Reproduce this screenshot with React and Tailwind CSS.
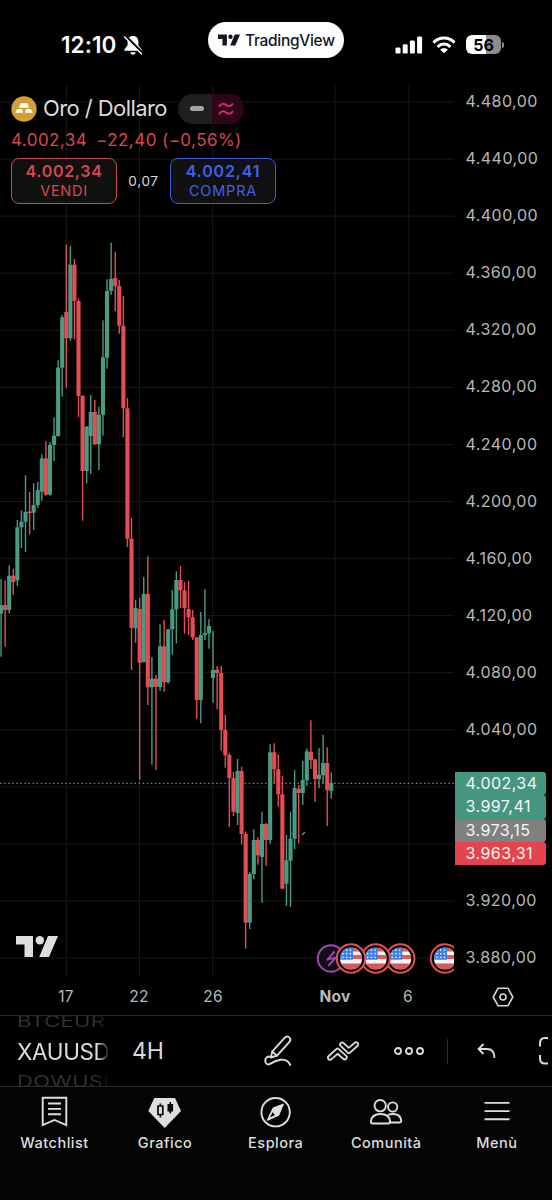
import React from "react";

const UP = "#4a9b83";
const DOWN = "#e44d53";

// [direction, high, body top, body bottom, low] in chart pixels
const CANDLES = [
  [1, 579, 605, 613.7, 656.7], [0, 580.7, 605, 610, 646.7], [1, 565.3, 575.7, 610, 613.3],
  [0, 569, 575.7, 582, 594.7], [1, 520, 527.3, 580.3, 586], [1, 510.3, 521.7, 527.3, 548],
  [1, 475.3, 512, 521.7, 552], [0, 492, 511.5, 513, 534.3], [1, 483.3, 505, 512.7, 530],
  [1, 482, 490, 505, 507.7], [1, 454.3, 458.3, 491.7, 500.7], [0, 441, 458.3, 494.7, 495.7],
  [1, 442, 445, 494.7, 495.7], [1, 417.3, 435.7, 445, 461], [1, 360.3, 367.7, 436, 436.7],
  [1, 315, 317.3, 367.7, 396.7], [0, 244.7, 312, 338.3, 387.7], [1, 246, 264.7, 338.3, 340.7],
  [0, 259, 264.7, 301, 339.3], [0, 298.3, 301, 396, 417.3], [0, 395, 396, 471, 520.7],
  [1, 426, 426.7, 471, 483.3], [1, 395, 412, 436, 474], [0, 400, 412, 444.3, 444.7],
  [1, 406.7, 415, 444.3, 470], [1, 320.3, 357.3, 415, 435.7], [1, 279.3, 291, 357.7, 368.7],
  [1, 242.7, 279, 291, 294.7], [0, 251.7, 278, 286, 311.3], [0, 280, 286, 325.7, 333.7],
  [0, 296, 325.7, 408.3, 437.3], [0, 398, 408.3, 538.7, 547], [0, 518, 538.7, 628, 670],
  [1, 599.7, 608, 628.3, 642.7], [0, 598, 609, 662.7, 780], [1, 577, 594, 662, 662.3],
  [0, 556.3, 594, 687.3, 705], [1, 657, 678.7, 687.3, 764.7], [0, 674.7, 678.7, 686.7, 770],
  [1, 624.3, 646.3, 687, 691], [0, 620, 646.3, 682.3, 692], [1, 629, 629.3, 682.3, 683.7],
  [1, 590, 609.3, 629.3, 654.7], [1, 571.3, 580, 609.3, 643.3], [0, 566, 580, 590.3, 608],
  [0, 582, 590.3, 608, 633.7], [0, 580.7, 609, 617.3, 635], [0, 610, 617.3, 637.3, 640],
  [0, 637, 637.3, 700, 718.7], [1, 612, 635, 700, 723.3], [1, 589, 633, 635, 640],
  [1, 619, 626, 633.3, 648.7], [1, 631, 670, 678, 702.7], [0, 666, 669.7, 673, 709.3],
  [0, 666, 673, 730, 750.7], [0, 714.7, 730, 755.3, 767.7], [0, 753, 755, 778, 827],
  [0, 772, 778, 811.7, 816], [1, 759, 771, 813, 825], [0, 766.7, 771, 834, 844.3],
  [0, 831.3, 834, 922.7, 948.7], [1, 872, 874, 922.7, 929], [1, 829.3, 840, 874, 879.3],
  [0, 837.3, 840, 855.3, 864.7], [1, 811.7, 824, 857, 902.7], [0, 823, 824, 840, 866],
  [1, 744.3, 752.3, 840, 843.7], [0, 743.3, 752.3, 769.3, 783.3], [0, 754.3, 769.3, 794.3, 806.7],
  [0, 776, 794.3, 888.7, 889], [1, 834.7, 860.3, 883.7, 906], [1, 811.7, 838.7, 860.7, 907],
  [1, 770, 788, 838.7, 849.3], [0, 785, 788.7, 793, 843.3], [1, 760.7, 780, 793, 805],
  [1, 748.3, 751.3, 780.3, 786], [0, 720.3, 751.7, 760, 769], [0, 759, 759.3, 779, 802],
  [1, 748, 774.7, 779, 788.3], [1, 734.7, 763, 775.3, 783.3], [0, 747.3, 763, 790, 826],
  [1, 772.3, 783, 791, 798.7],
];

const PRICES = [
  "4.480,00", "4.440,00", "4.400,00", "4.360,00", "4.320,00", "4.280,00", "4.240,00", "4.200,00",
  "4.160,00", "4.120,00", "4.080,00", "4.040,00", "", "", "3.920,00", "3.880,00",
];

const GRID_X = [66.3, 139.5, 212.7, 335, 408.8];

function TvMark({ className }) {
  return (
    <svg viewBox="0 0 42 21" className={className} fill="currentColor">
      <path d="M0 0H17V21H8.5V8.5H0Z" />
      <circle cx="23.8" cy="4.2" r="4.2" />
      <path d="M32 0H42L33 21H23.2Z" />
    </svg>
  );
}

function Flag({ cx }) {
  return (
    <g transform={`translate(${cx} 958.5)`}>
      <circle r="14.2" fill="#000" stroke={DOWN} strokeWidth="2" />
      <g clipPath="url(#flag)">
        <rect x="-11" y="-11" width="22" height="22" fill="#f5f5f5" />
        <rect x="-11" y="-11" width="22" height="4" fill="#e4575b" />
        <rect x="-11" y="-3.5" width="22" height="4" fill="#e4575b" />
        <rect x="-11" y="5" width="22" height="7" fill="#d9565a" />
        <rect x="-11" y="-12" width="13" height="13.2" fill="#3f7fe0" />
        {[-8, -4.3, -0.6].map((x) =>
          [-8.4, -4.8, -1.2].map((y) => <circle key={x + "_" + y} cx={x} cy={y} r="0.9" fill="#d6e6ff" />)
        )}
      </g>
    </g>
  );
}

function Chart() {
  return (
    <svg viewBox="0 85 454 891" className="block h-[891px] w-[454px]">
      <defs>
        <clipPath id="flag"><circle r="11" /></clipPath>
      </defs>
      <g stroke="#191919" strokeWidth="1">
        {PRICES.map((_, i) => (
          <line key={i} x1="0" x2="454" y1={102 + i * 57.07} y2={102 + i * 57.07} />
        ))}
        {GRID_X.map((x) => <line key={x} x1={x} x2={x} y1="85" y2="976" />)}
      </g>
      <line x1="0" x2="454" y1="783.4" y2="783.4" stroke={UP} strokeWidth="1.3" strokeDasharray="1.5 2.577" />
      {CANDLES.map(([up, high, top, bottom, low], i) => {
        const x = 1 + i * 4.077;
        const color = up ? UP : DOWN;
        return (
          <g key={i} fill={color}>
            <rect x={x - 0.65} y={high} width="1.4" height={low - high} />
            <rect x={x - 2} y={top} width="4.1" height={bottom - top} />
          </g>
        );
      })}
      <path d="M302 835L305 832" stroke="#8b93a5" strokeWidth="1.1" />
      <path d="M291.5 833L294 835" stroke="#8b93a5" strokeWidth="0.8" />
      <g transform="translate(331 958.5)">
        <circle r="13.2" fill="#140f17" stroke="#a247b8" strokeWidth="1.9" />
        <path d="M3.6 -7L-3.6 1.2L4.6 -0.9L-2.6 7.4" fill="none" stroke="#a247b8" strokeWidth="1.9" strokeLinejoin="round" />
      </g>
      {[445, 400.3, 375.7, 351].map((cx) => <Flag key={cx} cx={cx} />)}
    </svg>
  );
}

function StatusBar() {
  return (
    <header className="flex h-[85px] items-start justify-between pl-[61px] pr-[49px] pt-[22px] text-white">
      <div className="flex w-[147px] items-center pt-[9px]">
        <span className="w-[56px] whitespace-nowrap text-[22.5px] font-semibold leading-7 tracking-[0.1px]">12:10</span>
        <svg viewBox="0 0 20 20" className="ml-[5.5px] h-5 w-5">
          <path d="M10 1C6.4 1 4.6 3.7 4.6 7V10.2L1.2 14.8V15.8H18.8V14.8L15.4 10.2V7C15.4 3.7 13.6 1 10 1ZM7.3 17.2H12.7C12.5 18.6 11.4 19.5 10 19.5S7.5 18.6 7.3 17.2Z" fill="#fff" />
          <path d="M2.1 1L19.8 18.6" stroke="#000" strokeWidth="3" />
          <path d="M1.1 1.5L18.8 19.2" stroke="#fff" strokeWidth="1.4" />
        </svg>
      </div>
      <div className="flex h-9 w-[136px] shrink-0 items-center rounded-full bg-white pl-[10px] text-[#14161f]">
        <TvMark className="h-[12px] w-[22px]" />
        <span className="ml-[5px] whitespace-nowrap pt-px text-[15.5px] font-medium tracking-[-0.3px]">TradingView</span>
      </div>
      <div className="flex w-[159px] items-center justify-end pt-[13px]">
        <svg viewBox="0 0 28 18" className="h-[18px] w-7" fill="#fff">
          <rect x="0.5" y="11.5" width="5" height="6" rx="1.3" />
          <rect x="7.7" y="8.3" width="5" height="9.2" rx="1.3" />
          <rect x="14.9" y="4.5" width="5" height="13" rx="1.3" />
          <rect x="22.1" y="0.5" width="5" height="17" rx="1.3" />
        </svg>
        <svg viewBox="0 0 24 18" className="ml-[9px] h-[18px] w-6" fill="none" stroke="#fff" strokeWidth="3">
          <path d="M1.5 6.6C7.5 .6 16.5 .6 22.5 6.6" />
          <path d="M5.6 10.8C9.4 7.2 14.6 7.2 18.4 10.8" />
          <path d="M12 17.3L8.2 13.7C10.2 11.8 13.8 11.8 15.8 13.7Z" fill="#fff" stroke="none" />
        </svg>
        <div className="ml-[10px] flex h-[19px] w-[35px] items-center justify-center rounded-[6px] bg-linear-to-r from-white from-56% to-[#8c8c8c] to-56% text-[16px] font-bold text-black">
          56
        </div>
        <div className="-mr-px ml-px h-[6px] w-[2px] rounded-r-full bg-[#8c8c8c]" />
      </div>
    </header>
  );
}

function Quote() {
  return (
    <div className="absolute left-[11px] top-[8px] flex flex-col">
      <div className="flex h-[31px] items-center">
        <svg viewBox="0 0 26 26" className="h-[26px] w-[26px]">
          <circle cx="13" cy="13" r="12.7" fill="#d29e36" />
          <path d="M9.6 7.3H16.4L18.1 11.7H7.9ZM6.3 12.9H10.8L12.5 16.8H4.2ZM15.2 12.9H19.7L21.8 16.8H13.5Z" fill="#fff" />
        </svg>
        <span className="ml-[6px] w-[124px] whitespace-nowrap text-[22px] tracking-[-0.58px] text-[#dbdbdb]">Oro / Dollaro</span>
        <div className="ml-[11px] flex h-[30px] w-[66px] overflow-hidden rounded-full">
          <div className="flex w-[34px] items-center justify-center bg-[#1f1f1f]">
            <div className="ml-[3px] h-[5px] w-[14px] rounded-[2.5px] bg-[#a3a3a3]" />
          </div>
          <div className="flex flex-1 items-center bg-[#2f0617] pl-[6px]">
            <svg viewBox="0 0 16 14" className="h-[14px] w-4" fill="none" stroke="#d52b6e" strokeWidth="2">
              <path d="M1 4.8C3.2 1.2 5.6 1.2 8 3S13 4.5 15 1.5" />
              <path d="M1 12.3C3.2 8.7 5.6 8.7 8 10.5S13 12 15 9" />
            </svg>
          </div>
        </div>
      </div>
      <div className="flex h-[32px] items-center whitespace-pre pt-px text-[17px] tracking-[0.44px] text-[#d8474f]">
        <span>4.002,34</span>
        <span className="ml-[9px]">−22,40 (−0,56%)</span>
      </div>
      <div className="mt-[2px] flex items-center">
        <div className="flex h-[46px] w-[106px] flex-col items-center justify-center rounded-[8px] border-[1.5px] border-[#cb474e] bg-[#111] pb-px text-[#d8474f]">
          <span className="text-[16px] font-semibold leading-[18px] tracking-[0.7px]">4.002,34</span>
          <span className="mt-[2px] text-[14.5px] leading-[18px] tracking-[0.7px]">VENDI</span>
        </div>
        <span className="w-[53px] text-center text-[13.5px] tracking-[0.7px] text-[#dbdbdb]">0,07</span>
        <div className="flex h-[46px] w-[106px] flex-col items-center justify-center rounded-[8px] border-[1.5px] border-[#3c5bd8] bg-[#111] pb-px text-[#3d61ee]">
          <span className="text-[16px] font-semibold leading-[18px] tracking-[0.85px]">4.002,41</span>
          <span className="mt-[2px] text-[14.5px] leading-[18px] tracking-[0.8px]">COMPRA</span>
        </div>
      </div>
    </div>
  );
}

function PriceAxis() {
  return (
    <div className="relative flex-1">
      <div className="flex h-[882.5px] flex-col justify-between pl-[11.5px] pt-[6px] text-[16px] tracking-[0.45px] text-[#b8b8b8]">
        {PRICES.map((p, i) => (
          <div key={i} className="h-5 leading-5">{p}</div>
        ))}
      </div>
      <div className="absolute left-[0.5px] top-[687px] w-[91px] text-[16px] leading-[22px] tracking-[0.45px] text-[#f5f5f5]">
        <div className="h-[23.3px] rounded-r-[3px] bg-[#459680] pl-[11px]">4.002,34</div>
        <div className="h-[23.3px] rounded-r-[3px] bg-[#459680] pl-[11px]">3.997,41</div>
        <div className="h-[23.3px] rounded-r-[3px] bg-[#808080] pl-[11px]">3.973,15</div>
        <div className="h-[23.3px] rounded-r-[3px] bg-[#e2464c] pl-[11px]">3.963,31</div>
      </div>
    </div>
  );
}

function TimeAxis() {
  return (
    <div className="flex h-[39px] items-center pb-px pt-[3px] text-[15.5px] tracking-[0.3px] text-[#b8b8b8]">
      <span className="ml-[46px] w-10 text-center">17</span>
      <span className="ml-[33px] w-10 text-center">22</span>
      <span className="ml-[34px] w-10 text-center">26</span>
      <span className="ml-[82px] w-10 text-center font-bold">Nov</span>
      <span className="ml-[33px] w-10 text-center">6</span>
      <svg viewBox="0 0 22 20" className="ml-[64px] h-5 w-[22px]" fill="none" stroke="#d6d6d6" strokeWidth="1.6">
        <path d="M6 1.3H16L20.8 10L16 18.7H6L1.2 10Z" strokeLinejoin="round" />
        <circle cx="11" cy="10" r="3" />
      </svg>
    </div>
  );
}

function Toolbar() {
  return (
    <div className="flex h-[72px] items-center overflow-hidden border-y border-[#2b2b2b] text-[#dcdcdc]">
      <div className="ml-[17px] flex h-[70px] w-[93px] shrink-0 flex-col overflow-hidden mask-r-from-86% mask-r-to-100%">
        <div className="-mt-[2px] h-4 origin-left scale-x-116 scale-y-85 text-[19px] leading-4 tracking-[0.2px] text-[#303030]">BTCEUR</div>
        <div className="mt-[8px] h-[28px] text-[22.5px] leading-[28px] tracking-[-0.35px]">XAUUSD</div>
        <div className="mt-[6px] h-4 origin-left scale-x-116 scale-y-85 text-[19px] leading-[19px] tracking-[0.2px] text-[#303030]">DOWUSD</div>
      </div>
      <div className="ml-[22px] w-[132px] shrink-0 text-[23px] tracking-[-0.1px]">4H</div>
      <svg viewBox="0 0 30 32" className="h-8 w-[30px] shrink-0" fill="none" stroke="currentColor" strokeWidth="1.9" strokeLinejoin="round" strokeLinecap="round">
        <path d="M7 22.5L8.2 16.6L20.8 2.7A3.1 3.1 0 0 1 25.5 6.8L13 20.7Z" />
        <path d="M8.4 16.7L12.9 20.6" />
        <path d="M7 22.3C4 20.3 1 23 1.2 26C1.4 29 4.2 30.2 6.5 28.6C11.5 25.5 22 20.8 26.3 30" />
      </svg>
      <svg viewBox="0 0 32 20" className="ml-[32.5px] h-5 w-8 shrink-0" fill="none" stroke="currentColor" strokeWidth="1.8" strokeLinejoin="round">
        <path d="M1.7 15L9.6 7.8Q10.5 7 11.4 7.8L19 14.6A2.1 2.1 0 0 1 16.2 17.8L10.5 12.8L4.6 18.2A2.1 2.1 0 0 1 1.7 15Z" />
        <path d="M13.8 5.2A2.1 2.1 0 0 1 16.7 2.1L21.8 6.9L27.5 1.8A2.1 2.1 0 0 1 30.4 5L22.7 11.9Q21.8 12.7 20.9 11.9Z" />
      </svg>
      <svg viewBox="0 0 30 10" className="ml-[35px] h-[10px] w-[30px] shrink-0" fill="none" stroke="currentColor" strokeWidth="1.9">
        <circle cx="4" cy="5" r="3" /><circle cx="15" cy="5" r="3" /><circle cx="26" cy="5" r="3" />
      </svg>
      <div className="ml-[23px] h-[25px] w-px shrink-0 bg-[#303030]" />
      <svg viewBox="0 0 19 16" className="ml-[29px] h-4 w-[19px] shrink-0" fill="none" stroke="currentColor" strokeWidth="1.8">
        <path d="M6.5 1L1.5 6L6.5 11M1.6 6H10C15 6 17.4 9 17.4 15" />
      </svg>
      <svg viewBox="0 0 14 30" className="ml-[42px] h-[30px] w-[14px] shrink-0" fill="none" stroke="currentColor" strokeWidth="2">
        <path d="M10 2H7Q2 2 2 7V10.5M2 19V22.5Q2 27.5 7 27.5H10" />
      </svg>
    </div>
  );
}

function NavItem({ label, children }) {
  return (
    <div className="flex w-[110.6px] shrink-0 flex-col items-center text-[#dedede]">
      <svg viewBox="0 0 34 34" className="h-[34px] w-[34px]" fill="none" stroke="currentColor" strokeWidth="1.9">
        {children}
      </svg>
      <span className="mt-[4px] text-[14.5px] font-medium leading-5 tracking-[0.5px]">{label}</span>
    </div>
  );
}

function BottomNav() {
  return (
    <nav className="-ml-[0.8px] flex h-[113px] bg-[#040404] pt-[8px]">
      <NavItem label="Watchlist">
        <path d="M4.7 2.8H28.3V30L16.5 25L4.7 30Z" />
        <path d="M10 8.5H23M10 13.9H23M10 19.3H23" />
      </NavItem>
      <NavItem label="Grafico">
        <path d="M6.3 3H27L33 16L16.7 33L.3 16Z" fill="currentColor" stroke="none" />
        <path d="M12.4 8.6V11M12.4 19.5V22.5M10 11H14.8V19.5H10Z" stroke="#080808" strokeWidth="1.7" />
        <path d="M22.3 7V18.5" stroke="#080808" strokeWidth="1.5" />
        <rect x="19.5" y="9" width="5.6" height="7.5" fill="#080808" stroke="none" />
      </NavItem>
      <NavItem label="Esplora">
        <circle cx="16.6" cy="17.2" r="14.2" />
        <path d="M24.2 9.3L14.2 13.2L8.6 25.1L19.5 20.2Z" fill="currentColor" strokeWidth="1.4" strokeLinejoin="round" />
        <path d="M13.6 17.2L16 20L11 22.6Z" fill="#040404" stroke="none" />
      </NavItem>
      <NavItem label="Comunità">
        <circle cx="11.2" cy="10.7" r="5.7" />
        <circle cx="23.7" cy="12" r="4.6" />
        <path d="M3.5 28.5Q1.8 28.5 1.9 26.6C2.5 21 6 19 11.5 19S20.7 21 21 26.6Q21 28.5 19.2 28.5Z" />
        <path d="M18.8 19.9C27 17.5 31.8 20.5 32.2 25.5Q32.2 27.5 30.2 27.5H21" />
      </NavItem>
      <NavItem label="Menù">
        <path d="M4.5 7.9H29.5M4.5 16.1H29.5M4.5 24.2H29.5" />
      </NavItem>
    </nav>
  );
}

export default function App() {
  return (
    <div className="flex h-[1200px] w-[552px] flex-col overflow-hidden bg-black font-['Inter','Liberation_Sans',sans-serif]">
      <StatusBar />
      <main className="flex h-[891px]">
        <section className="relative w-[454px] shrink-0">
          <Chart />
          <Quote />
          <TvMark className="absolute left-[16px] top-[851px] h-[21px] w-[42px] text-[#dedede]" />
        </section>
        <PriceAxis />
      </main>
      <TimeAxis />
      <Toolbar />
      <BottomNav />
    </div>
  );
}
